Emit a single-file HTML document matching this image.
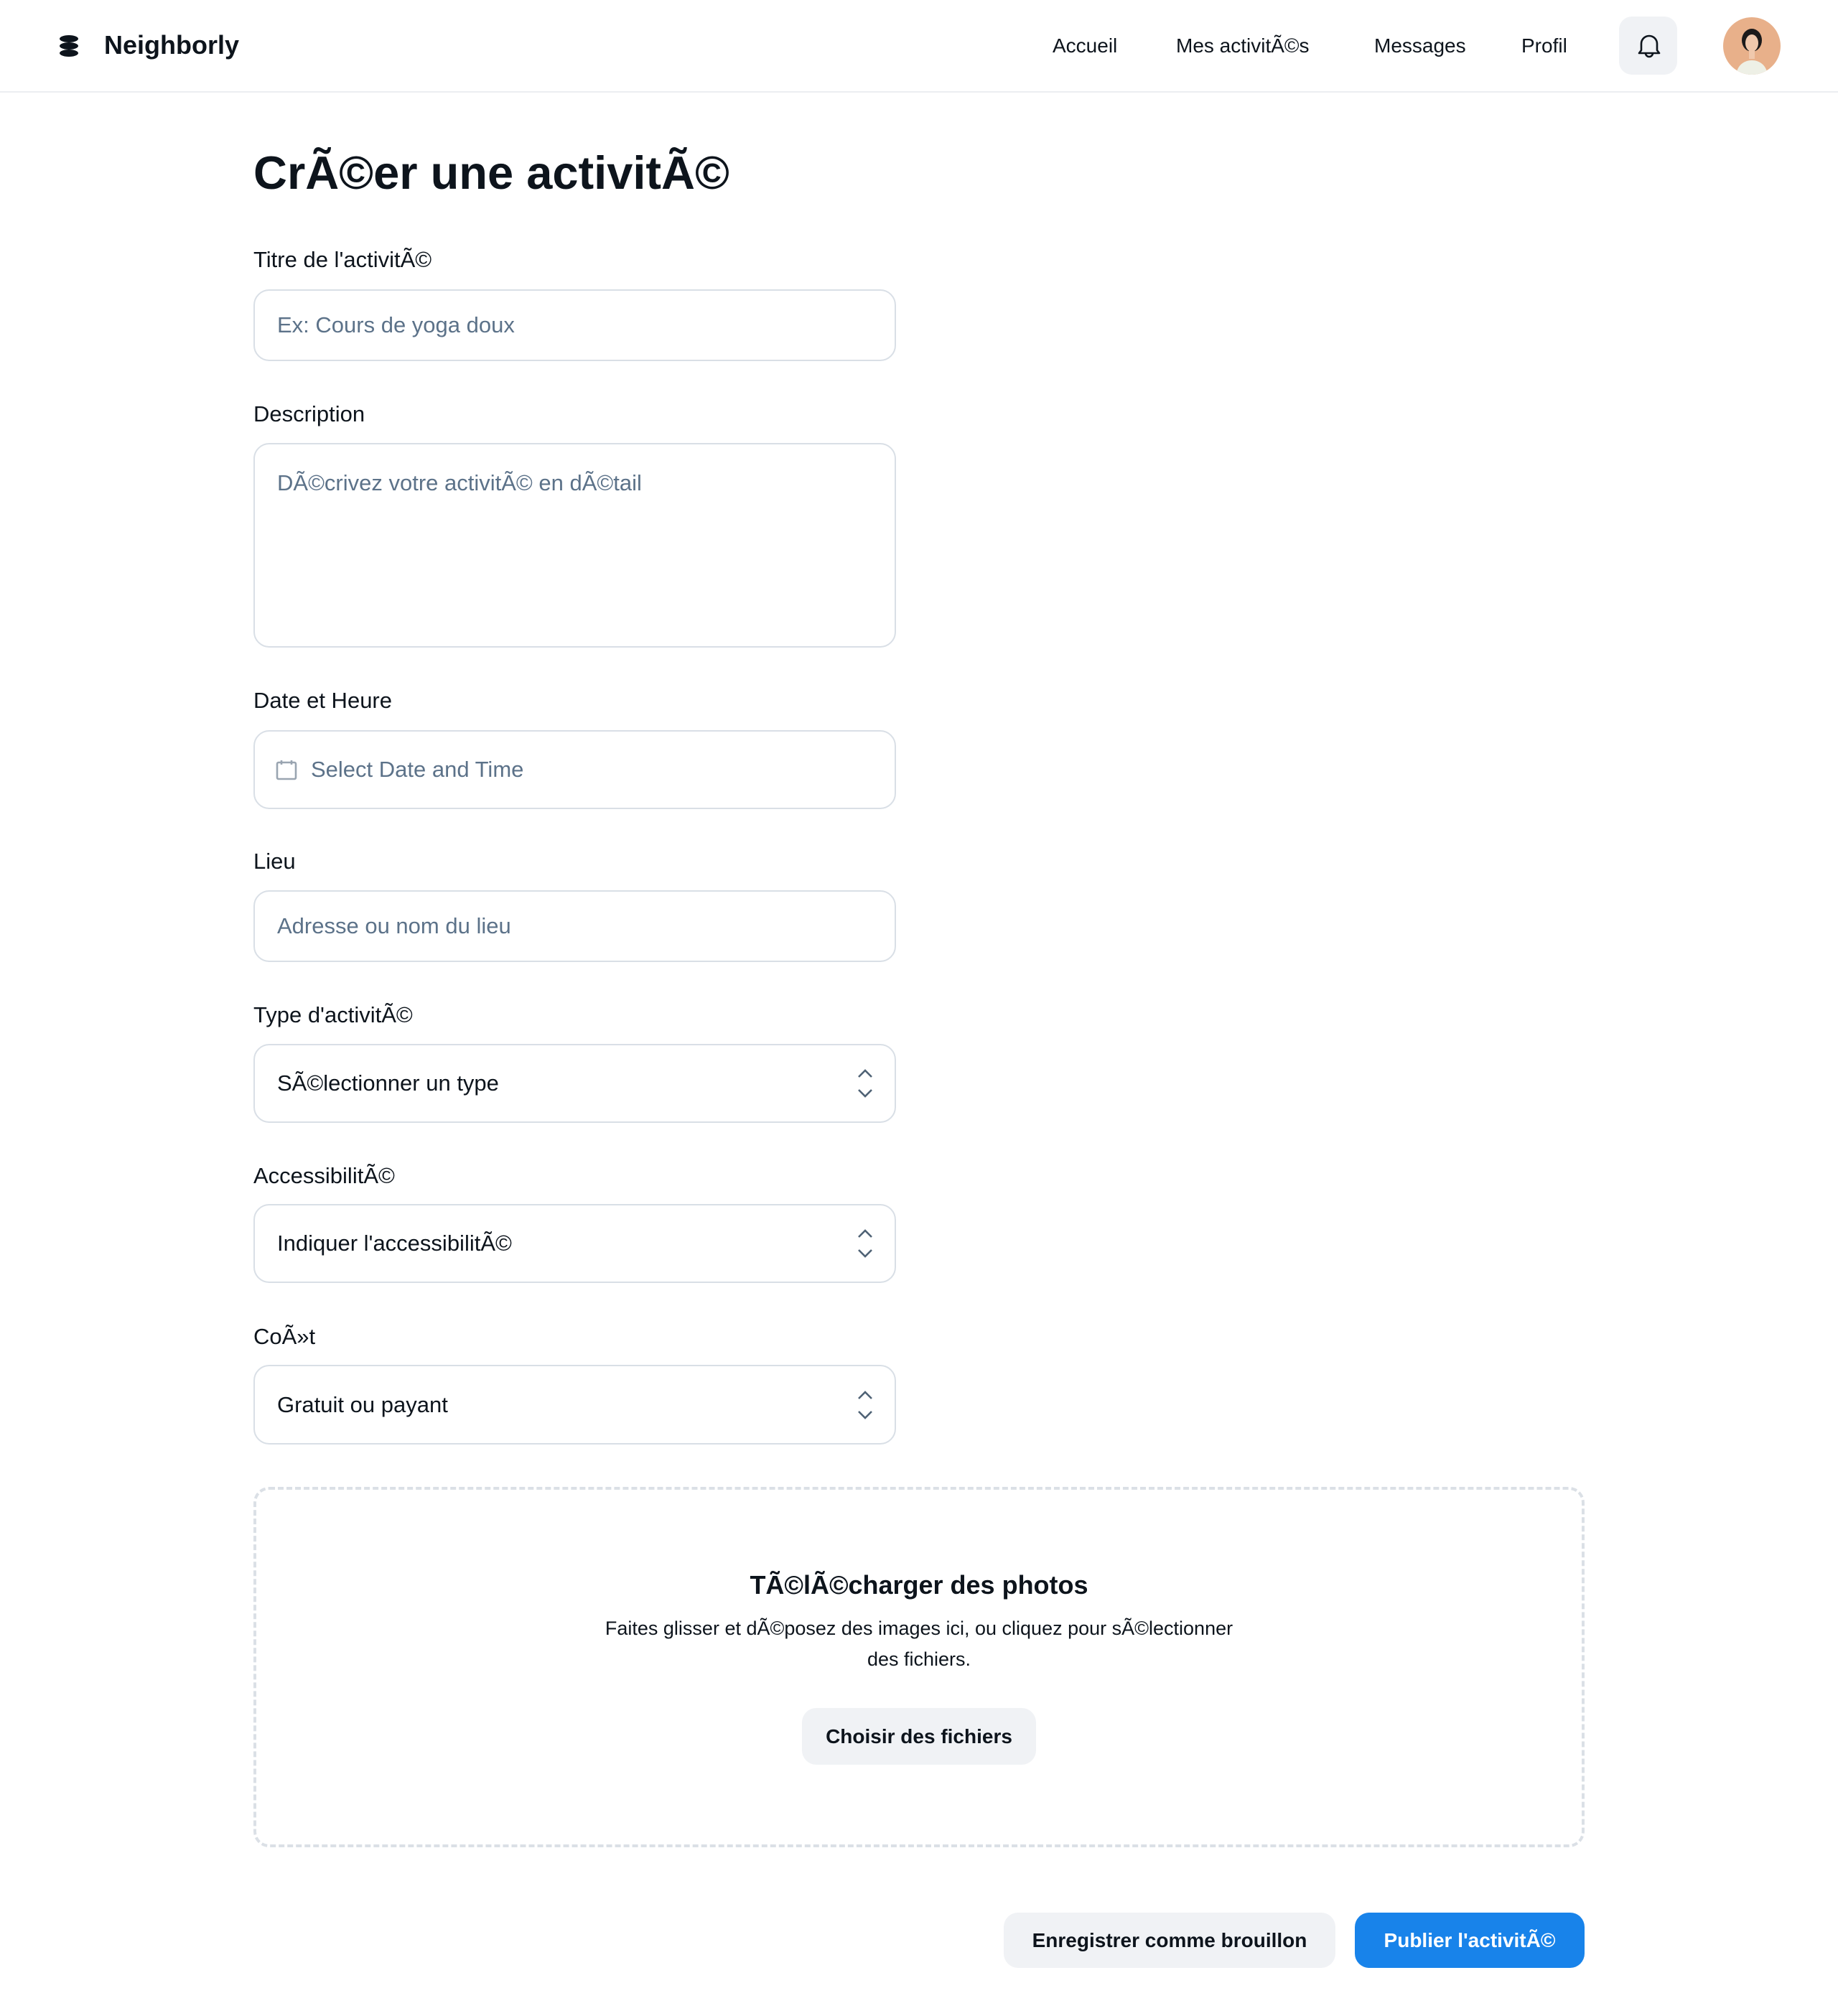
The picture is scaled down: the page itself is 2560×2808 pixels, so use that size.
<!DOCTYPE html>
<html><head><meta charset="utf-8">
<style>
*{box-sizing:border-box;margin:0;padding:0}
html,body{width:2560px;height:2808px;background:#fff;overflow:hidden}
body{font-family:"Liberation Sans",sans-serif;color:#0d141c;position:relative}
.a{position:absolute}
.hdr{left:0;top:0;width:2560px;height:129px;border-bottom:2px solid #eceef1}
.nav{font-size:28px;top:48px}
.lbl{font-size:31px;left:353px}
.inp{left:353px;width:895px;border:2px solid #d9dfe6;border-radius:22px;font-size:31px;color:#5c7289;padding-left:31px;display:flex;align-items:center}
.sel{color:#0d141c}
.chev{position:absolute;right:28px;top:50%;transform:translateY(-50%)}
.btn{border-radius:20px;font-weight:bold;font-size:28px;display:flex;align-items:center;justify-content:center}
</style></head><body>
<div class="a hdr"></div>
<svg class="a" style="left:80px;top:48px" width="32" height="32" viewBox="0 0 32 32"><ellipse cx="16" cy="6" rx="13" ry="5" fill="#0d141c"/><ellipse cx="16" cy="16" rx="13" ry="5" fill="#0d141c"/><ellipse cx="16" cy="26" rx="13" ry="5" fill="#0d141c"/></svg>
<div class="a" style="left:145px;top:42px;font-size:36px;font-weight:bold">Neighborly</div>
<div class="a nav" style="left:1466px">Accueil</div>
<div class="a nav" style="left:1638px">Mes activitÃ©s</div>
<div class="a nav" style="left:1914px">Messages</div>
<div class="a nav" style="left:2119px">Profil</div>
<div class="a" style="left:2255px;top:23px;width:81px;height:81px;border-radius:18px;background:#f0f2f5"></div>
<svg class="a" style="left:2280px;top:46px" width="34" height="36" viewBox="0 0 34 36" fill="none" stroke="#0d141c" stroke-width="2.6" stroke-linejoin="round"><path d="M6 15a11 11 0 0 1 22 0v9l3 4H3l3-4z"/><path d="M12 28a5 5 0 0 0 10 0"/></svg>
<svg class="a" style="left:2400px;top:24px" width="80" height="80" viewBox="0 0 80 80"><defs><clipPath id="c"><circle cx="40" cy="40" r="40"/></clipPath></defs><g clip-path="url(#c)"><rect width="80" height="80" fill="#e8b08a"/><path d="M18 80c2-14 12-20 22-20s20 6 22 20z" fill="#eef0e6"/><ellipse cx="40" cy="32" rx="14" ry="16" fill="#1c1a1a"/><ellipse cx="40" cy="36" rx="9" ry="12" fill="#f0c8ac"/><rect x="36" y="46" width="8" height="12" fill="#f0c8ac"/></g></svg>
<div class="a" style="left:353px;top:203px;font-size:65px;font-weight:bold">CrÃ©er une activitÃ©</div>

<div class="a lbl" style="top:344px">Titre de l'activitÃ©</div>
<div class="a inp" style="top:403px;height:100px">Ex: Cours de yoga doux</div>

<div class="a lbl" style="top:559px">Description</div>
<div class="a inp" style="top:617px;height:285px;align-items:flex-start;padding-top:36px">DÃ©crivez votre activitÃ© en dÃ©tail</div>

<div class="a lbl" style="top:958px">Date et Heure</div>
<div class="a inp" style="top:1017px;height:110px;padding-left:28px"><svg width="32" height="32" viewBox="0 0 32 32" fill="none" stroke="#9aa5b1" stroke-width="2.6" style="margin-right:18px"><rect x="3" y="6" width="26" height="23" rx="2"/><path d="M9 3v6M23 3v6"/></svg>Select Date and Time</div>

<div class="a lbl" style="top:1182px">Lieu</div>
<div class="a inp" style="top:1240px;height:100px">Adresse ou nom du lieu</div>

<div class="a lbl" style="top:1396px">Type d'activitÃ©</div>
<div class="a inp sel" style="top:1454px;height:110px">SÃ©lectionner un type<svg class="chev" width="26" height="46" viewBox="0 0 26 46" fill="none" stroke="#4f6275" stroke-width="2.6"><path d="M4 14l9-9 9 9M4 32l9 9 9-9"/></svg></div>

<div class="a lbl" style="top:1620px">AccessibilitÃ©</div>
<div class="a inp sel" style="top:1677px;height:110px">Indiquer l'accessibilitÃ©<svg class="chev" width="26" height="46" viewBox="0 0 26 46" fill="none" stroke="#4f6275" stroke-width="2.6"><path d="M4 14l9-9 9 9M4 32l9 9 9-9"/></svg></div>

<div class="a lbl" style="top:1844px">CoÃ»t</div>
<div class="a inp sel" style="top:1901px;height:111px">Gratuit ou payant<svg class="chev" width="26" height="46" viewBox="0 0 26 46" fill="none" stroke="#4f6275" stroke-width="2.6"><path d="M4 14l9-9 9 9M4 32l9 9 9-9"/></svg></div>

<div class="a" style="left:353px;top:2071px;width:1854px;height:502px;border:4px dashed #dbe0e6;border-radius:22px"></div>
<div class="a" style="left:353px;width:1854px;top:2187px;text-align:center;font-size:36px;font-weight:bold">TÃ©lÃ©charger des photos</div>
<div class="a" style="left:830px;width:900px;top:2247px;text-align:center;font-size:27px;line-height:43px">Faites glisser et dÃ©posez des images ici, ou cliquez pour sÃ©lectionner des fichiers.</div>
<div class="a btn" style="left:1117px;top:2379px;width:326px;height:79px;background:#f0f2f5">Choisir des fichiers</div>

<div class="a btn" style="left:1398px;top:2664px;width:462px;height:77px;background:#f0f2f5">Enregistrer comme brouillon</div>
<div class="a btn" style="left:1887px;top:2664px;width:320px;height:77px;background:#1883ea;color:#fff">Publier l'activitÃ©</div>
</body></html>
